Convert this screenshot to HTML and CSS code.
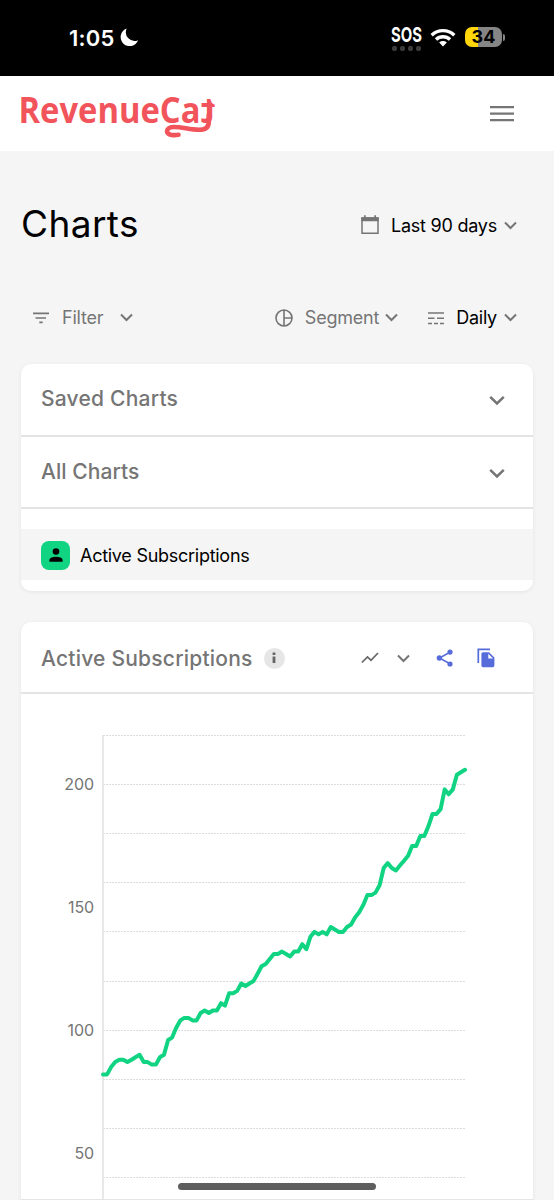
FILE: index.html
```
<!DOCTYPE html>
<html lang="en">
<head>
<meta charset="utf-8">
<meta name="viewport" content="width=device-width, initial-scale=1">
<title>Charts</title>
<link rel="stylesheet" href="styles.css">
</head>
<body>

<div class="status">
    <div class="clock">
        <span>1:05</span>
        <svg width="19" height="19" viewBox="0 0 19 19"><path fill="#fff" d="M6.7 0.6A9 9 0 1 0 18.1 12.2A8.7 8.7 0 0 1 6.7 0.6Z"/></svg>
    </div>
    <div class="sos">
        <svg width="34" height="28" viewBox="0 0 34 28"><text class="sosText" x="1" y="22" textLength="31" lengthAdjust="spacingAndGlyphs">SOS</text></svg>
        <div class="dots"><i></i><i></i><i></i><i></i></div>
    </div>
    <svg class="wifi" width="26" height="19" viewBox="0 0 26 19">
        <path fill="none" stroke="#fff" stroke-width="3.4" d="M1.7 7.2A16.2 16.2 0 0 1 24.3 7.2M6 11.5A10.2 10.2 0 0 1 20 11.5"/>
        <path fill="#fff" d="M13 18.4L9.2 14.4A5.6 5.6 0 0 1 16.8 14.4Z"/>
    </svg>
    <div class="battery"><span>34</span></div>
    <div class="batteryTip"></div>
</div>

<div class="header">
    <svg class="logo" width="200" height="61" viewBox="0 0 200 61">
        <text class="logoText" x="-1.5" y="40" textLength="182" lengthAdjust="spacingAndGlyphs">RevenueCa</text>
        <text class="logoText" transform="translate(195.5 40) scale(-1 1)">t</text>
        <path class="tail" d="M188.8 32V39C188.8 45 185 46.8 179 46.8C170 46.8 161 43.7 153.5 44C145.5 44.5 145 51 151.5 52C154 52.3 156 52.2 158.5 51.8"/>
    </svg>
    <svg width="24" height="18" viewBox="0 0 24 18"><path stroke="#757575" stroke-width="2.3" d="M0 2.2H24M0 8.7H24M0 15.2H24"/></svg>
</div>

<div class="titleBar">
    <h1>Charts</h1>
    <div class="control dark">
        <svg class="calendar" width="18" height="20" viewBox="0 0 18 20"><path fill="none" stroke="#757575" stroke-width="1.5" d="M1 3H17V18.3H1Z"/><path fill="#757575" d="M.3 2.3H17.7V6.2H.3ZM3 .3H4.7V3H3ZM13.3 .3H15V3H13.3Z"/></svg>
        <span class="range">Last 90 days</span>
        <svg class="chevron" width="13" height="9" viewBox="0 0 13 9"><path d="M1 1.5L6.5 7L12 1.5"/></svg>
    </div>
</div>

<div class="filters">
    <div class="control">
        <svg class="filterIcon" width="16" height="12" viewBox="0 0 16 12"><path stroke="#757575" stroke-width="1.6" d="M0 1.4H16M2.5 6H13M6.3 10.4H9.7"/></svg>
        <span class="filterText">Filter</span>
        <svg class="chevron" width="13" height="9" viewBox="0 0 13 9"><path d="M1 1.5L6.5 7L12 1.5"/></svg>
    </div>
    <div class="control segment">
        <svg width="18" height="18" viewBox="0 0 18 18"><path fill="none" stroke="#757575" stroke-width="1.6" d="M9 1A8 8 0 1 0 9 17A8 8 0 1 0 9 1V17M9 9H17"/></svg>
        <span class="segmentText">Segment</span>
        <svg class="chevron" width="13" height="9" viewBox="0 0 13 9"><path d="M1 1.5L6.5 7L12 1.5"/></svg>
    </div>
    <div class="control dark">
        <svg width="16" height="14" viewBox="0 0 16 14"><path stroke="#757575" stroke-width="1.5" d="M0 2H16M0 7.3H6.5M9 7.3H16M0 12.6H4M6 12.6H10M12 12.6H16"/></svg>
        <span class="dailyText">Daily</span>
        <svg class="chevron" width="13" height="9" viewBox="0 0 13 9"><path d="M1 1.5L6.5 7L12 1.5"/></svg>
    </div>
</div>

<div class="card menu">
    <div class="menuRow">
        <span>Saved Charts</span>
        <svg class="chevron big" width="16" height="11" viewBox="0 0 16 11"><path d="M1.2 1.8L8 8.5L14.8 1.8"/></svg>
    </div>
    <div class="menuRow">
        <span class="allText">All Charts</span>
        <svg class="chevron big" width="16" height="11" viewBox="0 0 16 11"><path d="M1.2 1.8L8 8.5L14.8 1.8"/></svg>
    </div>
    <div class="selected">
        <div class="badge">
            <svg width="14" height="14" viewBox="0 0 14 14"><circle cx="7" cy="3.5" r="3.3"/><path d="M.4 13.7V12C.4 9.6 4 8.7 7 8.7S13.6 9.6 13.6 12V13.7Z"/></svg>
        </div>
        <span>Active Subscriptions</span>
    </div>
</div>

<div class="card chart">
    <div class="chartHead">
        <span class="chartTitle">Active Subscriptions</span>
        <span class="info"><svg width="4" height="12" viewBox="0 0 4 12"><path fill="#666" d="M.6 .5H3.4V3H.6ZM.6 4.5H3.4V11H.6Z"/></svg></span>
        <svg class="lineIcon" width="18" height="12" viewBox="0 0 18 12"><path fill="none" stroke="#666" stroke-width="1.7" d="M.9 10.5L6.5 4.9L10 8.3L17 1"/></svg>
        <svg class="chevron" width="13" height="9" viewBox="0 0 13 9"><path d="M1 1.5L6.5 7L12 1.5"/></svg>
        <svg class="share" width="18" height="18" viewBox="0 0 18 18"><path fill="none" stroke="#576cdb" stroke-width="1.5" d="M14.3 3L3.5 9L14.3 15"/><g fill="#576cdb"><circle cx="14" cy="3.1" r="2.6"/><circle cx="3.4" cy="9" r="2.7"/><circle cx="14" cy="15" r="2.6"/></g></svg>
        <svg width="18" height="20" viewBox="0 0 18 20"><path fill="none" stroke="#576cdb" stroke-width="1.7" d="M1.3 15V1.3H13"/><path fill="#576cdb" fill-rule="evenodd" d="M6 4.2H12L17.4 9.6V17.6Q17.4 19.3 15.7 19.3H6Q4.4 19.3 4.4 17.6V5.8Q4.4 4.2 6 4.2ZM11.3 5.7V10.5H16Z"/></svg>
    </div>
    <svg id="plot" width="512" height="506" viewBox="0 0 512 506">
        <g id="grid"></g>
        <path stroke="#e0e0e0" stroke-width="1.5" d="M82 41V505"/>
        <path stroke="#e4e4e4" d="M0 505.5H512"/>
        <g class="labels">
            <text x="73" y="96.2">200</text>
            <text x="73" y="219">150</text>
            <text x="73" y="342">100</text>
            <text x="73" y="465">50</text>
        </g>
        <polyline id="line"/>
    </svg>
</div>

<div class="homeBar"></div>

<script>
var values = [82, 82, 85, 87, 88, 88, 87, 88, 89, 90, 87, 87, 86, 86, 89,
    90, 96, 97, 101, 104, 105, 105, 104, 104, 107, 108, 107, 108, 108, 111,
    110, 115, 115, 116, 119, 118, 119, 120, 123, 126, 127, 129, 131, 131, 132,
    131, 130, 132, 132, 135, 133, 138, 140, 139, 140, 139, 142, 141, 140, 140,
    142, 143, 146, 148, 151, 155, 155, 156, 159, 166, 168, 166, 165, 167, 169,
    171, 175, 175, 179, 179, 183, 188, 188, 190, 198, 196, 198, 204, 205, 206];
var left = 82;
var right = 444;

// Vertical position of a value in the plot
function scale(value) {
    return 90.5 + (200 - value) * 2.457;
}

// Dotted line every 20 subscriptions
var grid = "";
for (var v = 40; v <= 220; v += 20) {
    grid += "M" + left + " " + (Math.floor(scale(v)) + 0.5) + "H" + right;
}
document.getElementById("grid").innerHTML = '<path class="gridLine" d="' + grid + '"/>';

// Join the daily values
var points = values.map(function(value, i) {
    return (left + i * (right - left) / (values.length - 1)).toFixed(1) + "," + scale(value).toFixed(1);
});
document.getElementById("line").setAttribute("points", points.join(" "));
</script>

</body>
</html>
```
FILE: styles.css
```
* {
    box-sizing: border-box;
}

body {
    margin: 0;
    height: 1200px;
    overflow: hidden;
    background: #f5f5f5;
    color: #757575;
    font-family: Inter, "Liberation Sans", sans-serif;
}

svg {
    display: block;
    flex: none;
}

span {
    white-space: nowrap;
}

/* Phone status bar */
.status {
    display: flex;
    align-items: center;
    height: 76px;
    padding: 0 49px 2px 69px;
    background: #000;
    color: #fff;
}

.clock {
    display: flex;
    align-items: center;
    gap: 6px;
    margin-right: auto;
    padding-top: 1px;
    font-size: 22px;
    font-weight: 600;
    letter-spacing: 0.2px;
}

.sos {
    margin-right: 6px;
    padding-bottom: 4px;
}

.sos svg {
    margin-bottom: -2px;
    overflow: visible;
}

.sosText {
    font-size: 20.5px;
    font-weight: 700;
    fill: #fff;
}

.dots {
    display: flex;
    gap: 3px;
    padding-left: 2px;
}

.dots i {
    width: 5px;
    height: 5px;
    border-radius: 2px;
    background: #3c3c3c;
}

.wifi {
    margin-right: 9px;
}

.battery {
    width: 37px;
    height: 20px;
    border-radius: 7px;
    background: linear-gradient(90deg, #ffd60a 13px, #858585 13px);
    color: #000;
    font-size: 18px;
    font-weight: 700;
    line-height: 20px;
    text-align: center;
}

.batteryTip {
    width: 2px;
    height: 7px;
    margin-left: 1px;
    border-radius: 0 3px 3px 0;
    background: #858585;
}

/* Site header */
.header {
    display: flex;
    align-items: center;
    justify-content: space-between;
    height: 75px;
    padding: 0 40px 0 20px;
    background: #fff;
}

.logo {
    overflow: visible;
}

.logoText {
    font-family: "Open Sans", sans-serif;
    font-size: 35px;
    font-weight: 700;
    fill: #f2545b;
}

.tail {
    fill: none;
    stroke: #f2545b;
    stroke-width: 4.6;
    stroke-linecap: round;
}

/* Title and date range */
.titleBar {
    display: flex;
    align-items: center;
    justify-content: space-between;
    height: 148px;
    padding: 0 37px 0 21px;
}

h1 {
    margin: 0;
    padding-bottom: 4px;
    color: #000;
    font-size: 37px;
    font-weight: 400;
    letter-spacing: 0.4px;
}

.control {
    display: flex;
    align-items: center;
    font-size: 18px;
    letter-spacing: -0.23px;
}

.dark {
    color: #000;
}

.chevron path {
    fill: none;
    stroke: #757575;
    stroke-width: 2;
}

.big path {
    stroke-width: 2.5;
}

.calendar {
    margin-right: 12px;
}

.range {
    margin-right: 7px;
}

/* Filters */
.filters {
    display: flex;
    height: 37px;
    padding: 0 37px 0 33px;
}

.filterText {
    margin: 0 17px 0 13px;
}

.segment {
    margin-left: auto;
    margin-right: 30px;
}

.segmentText {
    margin: 0 6px 0 12px;
}

.dailyText {
    margin: 0 7px 0 12px;
}

/* Cards */
.card {
    width: 512px;
    margin-left: 21px;
    border-radius: 10px;
    background: #fff;
    box-shadow: 0 1px 4px rgba(0, 0, 0, 0.07);
}

.menu {
    height: 227px;
    margin-top: 28px;
}

.menuRow {
    display: flex;
    align-items: center;
    justify-content: space-between;
    height: 72.5px;
    padding: 0 28px 1px 20px;
    border-bottom: 2px solid #e4e4e4;
    font-size: 21px;
    font-weight: 500;
    letter-spacing: 0.22px;
}

.allText {
    letter-spacing: 0.05px;
}

.menuRow .chevron {
    margin-top: 4px;
}

.selected {
    display: flex;
    align-items: center;
    gap: 10px;
    height: 51px;
    margin-top: 20px;
    padding: 1px 0 0 20px;
    background: #f5f5f5;
    color: #000;
    font-size: 18px;
    letter-spacing: -0.27px;
}

.badge {
    display: flex;
    align-items: center;
    justify-content: center;
    width: 29px;
    height: 29px;
    border-radius: 8px;
    background: #11d483;
}

/* Chart */
.chart {
    height: 588px;
    margin-top: 31px;
    border-radius: 10px 10px 0 0;
}

.chartHead {
    display: flex;
    align-items: center;
    height: 72px;
    padding: 2px 38px 0 20px;
    border-bottom: 2px solid #e4e4e4;
    font-size: 21px;
    font-weight: 500;
    letter-spacing: 0.22px;
}

.info {
    display: flex;
    align-items: center;
    justify-content: center;
    width: 21px;
    height: 21px;
    margin-left: 11px;
    border-radius: 50%;
    background: #e6e6e6;
}

.lineIcon {
    margin: 0 18px 0 auto;
}

.chartHead .chevron {
    margin-right: 1px;
}

.share {
    margin: 0 23px 0 25px;
}

.gridLine {
    stroke: #dcdcdc;
    stroke-dasharray: 2 1;
}

.labels {
    fill: #757575;
    font-size: 16px;
    letter-spacing: -0.1px;
    text-anchor: end;
}

#line {
    fill: none;
    stroke: #11d483;
    stroke-width: 4;
    stroke-linecap: round;
    stroke-linejoin: round;
}

/* Home indicator */
.homeBar {
    position: absolute;
    top: 1183px;
    left: 178px;
    width: 198px;
    height: 7px;
    border-radius: 4px;
    background: #5e5e5e;
}
```
